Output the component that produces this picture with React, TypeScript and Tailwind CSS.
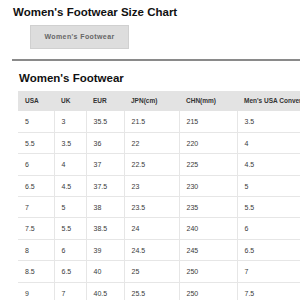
import React from "react";

const rows: string[][] = [
  ["5", "3", "35.5", "21.5", "215", "3.5"],
  ["5.5", "3.5", "36", "22", "220", "4"],
  ["6", "4", "37", "22.5", "225", "4.5"],
  ["6.5", "4.5", "37.5", "23", "230", "5"],
  ["7", "5", "38", "23.5", "235", "5.5"],
  ["7.5", "5.5", "38.5", "24", "240", "6"],
  ["8", "6", "39", "24.5", "245", "6.5"],
  ["8.5", "6.5", "40", "25", "250", "7"],
  ["9", "7", "40.5", "25.5", "250", "7.5"],
];

const headers = ["USA", "UK", "EUR", "JPN(cm)", "CHN(mm)", "Men's USA Conversion"];
const widths = ["w-[36px]", "w-[32px]", "w-[38px]", "w-[55px]", "w-[58px]", "w-[120px]"];

export default function App() {
  return (
    <div
      className="w-[300px] h-[300px] overflow-hidden bg-white text-[#222]"
      style={{ fontFamily: '"Liberation Sans", Arial, sans-serif' }}
    >
      <div className="pl-[13px] pt-[6px]">
        <h1 className="text-[11.5px] leading-[13px] font-bold text-[#111]">
          Women's Footwear Size Chart
        </h1>
      </div>
      <div className="pl-[30px] pt-[6px]">
        <div className="w-[99px] h-[24px] bg-[#dddddd] border border-[#d0d0d0] flex items-center justify-center">
          <span className="text-[7px] font-bold tracking-[0.4px] text-[#666]">
            Women's Footwear
          </span>
        </div>
      </div>
      <div className="ml-[12px] mt-[10px] h-[2px] bg-[#8a8a8a]" />
      <div className="pl-[19px] pt-[10px]">
        <h2 className="text-[11.5px] leading-[15px] font-bold text-[#111]">
          Women's Footwear
        </h2>
      </div>
      <div className="pl-[18px] pt-[5px] overflow-hidden">
        <table className="border-collapse table-fixed w-[339px]">
          <thead>
            <tr className="bg-[#e3e3e3] h-[20px]">
              {headers.map((h, i) => (
                <th
                  key={h}
                  className={`${widths[i]} text-left font-bold text-[6.5px] text-[#333] pl-[7px] whitespace-nowrap`}
                >
                  {h}
                </th>
              ))}
            </tr>
          </thead>
          <tbody>
            {rows.map((r, ri) => (
              <tr key={ri} className="h-[21.4px] border-b border-[#e6e6e6]">
                {r.map((c, ci) => (
                  <td
                    key={ci}
                    className="text-[7px] text-[#3a3a3a] pl-[7px] pt-[2px] border-r border-[#e6e6e6]"
                  >
                    {c}
                  </td>
                ))}
              </tr>
            ))}
          </tbody>
        </table>
      </div>
    </div>
  );
}
